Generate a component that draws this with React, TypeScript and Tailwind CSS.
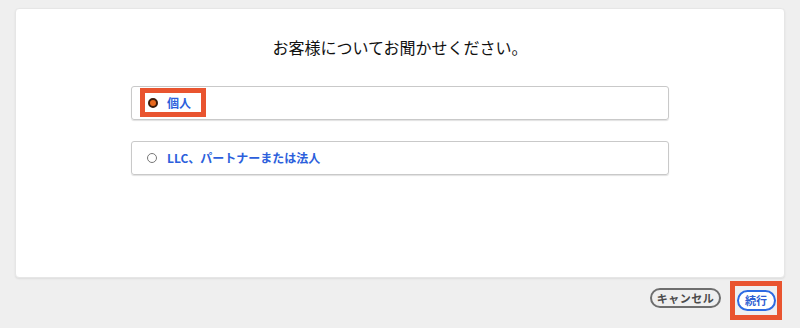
import React from "react";

export default function App() {
  const font = { fontFamily: '"Noto Sans CJK JP", "Noto Sans", sans-serif' };
  return (
    <div className="w-[800px] h-[328px] bg-[#efefef] overflow-hidden flex flex-col" style={font}>
      <div className="mx-[15px] mt-[8px] h-[270px] bg-white rounded-[4px] border border-[#e6e6e6] shadow-[0_1px_2px_rgba(0,0,0,0.08)] flex flex-col items-center pt-[26px]">
        <h1 className="text-[16px] leading-[24px] text-[#111] font-normal">お客様についてお聞かせください。</h1>
        <div className="mt-[27px] w-[538px] flex flex-col gap-[21px]">
          <div className="h-[34px] border border-[#c9c9c9] rounded-[3px] shadow-[0_1px_1px_rgba(0,0,0,0.12)] pl-[8px] pt-[1px]">
            <div className="inline-flex items-center h-[29px] border-[5px] border-[#e9542f] pl-[3px] pr-[10px]">
              <span className="w-[10px] h-[10px] rounded-full bg-[#e8691e] border-[2px] border-[#3b1a08]" />
              <span className="ml-[9px] text-[12px] font-bold text-[#2c5fdc] leading-none">個人</span>
            </div>
          </div>
          <div className="h-[34px] border border-[#c9c9c9] rounded-[3px] shadow-[0_1px_1px_rgba(0,0,0,0.12)] pl-[8px] pt-[1px]">
            <div className="inline-flex items-center h-[29px] border-[5px] border-transparent pl-[2px] pr-[10px]">
              <span className="w-[10px] h-[10px] rounded-full bg-white border border-[#777]" />
              <span className="ml-[10px] text-[12px] font-bold text-[#2c5fdc] leading-none">LLC、パートナーまたは法人</span>
            </div>
          </div>
        </div>
      </div>
      <div className="mt-[3px] flex justify-end items-center pr-[18px] gap-[9px]">
        <button className="mb-[5px] h-[20px] w-[71px] rounded-full border-[2px] border-[#6e6e6e] text-[11px] font-bold text-[#4a4a4a] leading-none flex items-center justify-center tracking-[0.5px]">キャンセル</button>
        <div className="w-[52px] h-[39px] border-[5px] border-[#e9542f] flex items-center justify-center bg-[#efefef]">
          <button className="h-[21px] w-[39px] rounded-full border-[2px] border-[#2d6ae3] bg-white text-[11px] font-bold text-[#2f5fd3] leading-none flex items-center justify-center">続行</button>
        </div>
      </div>
    </div>
  );
}
